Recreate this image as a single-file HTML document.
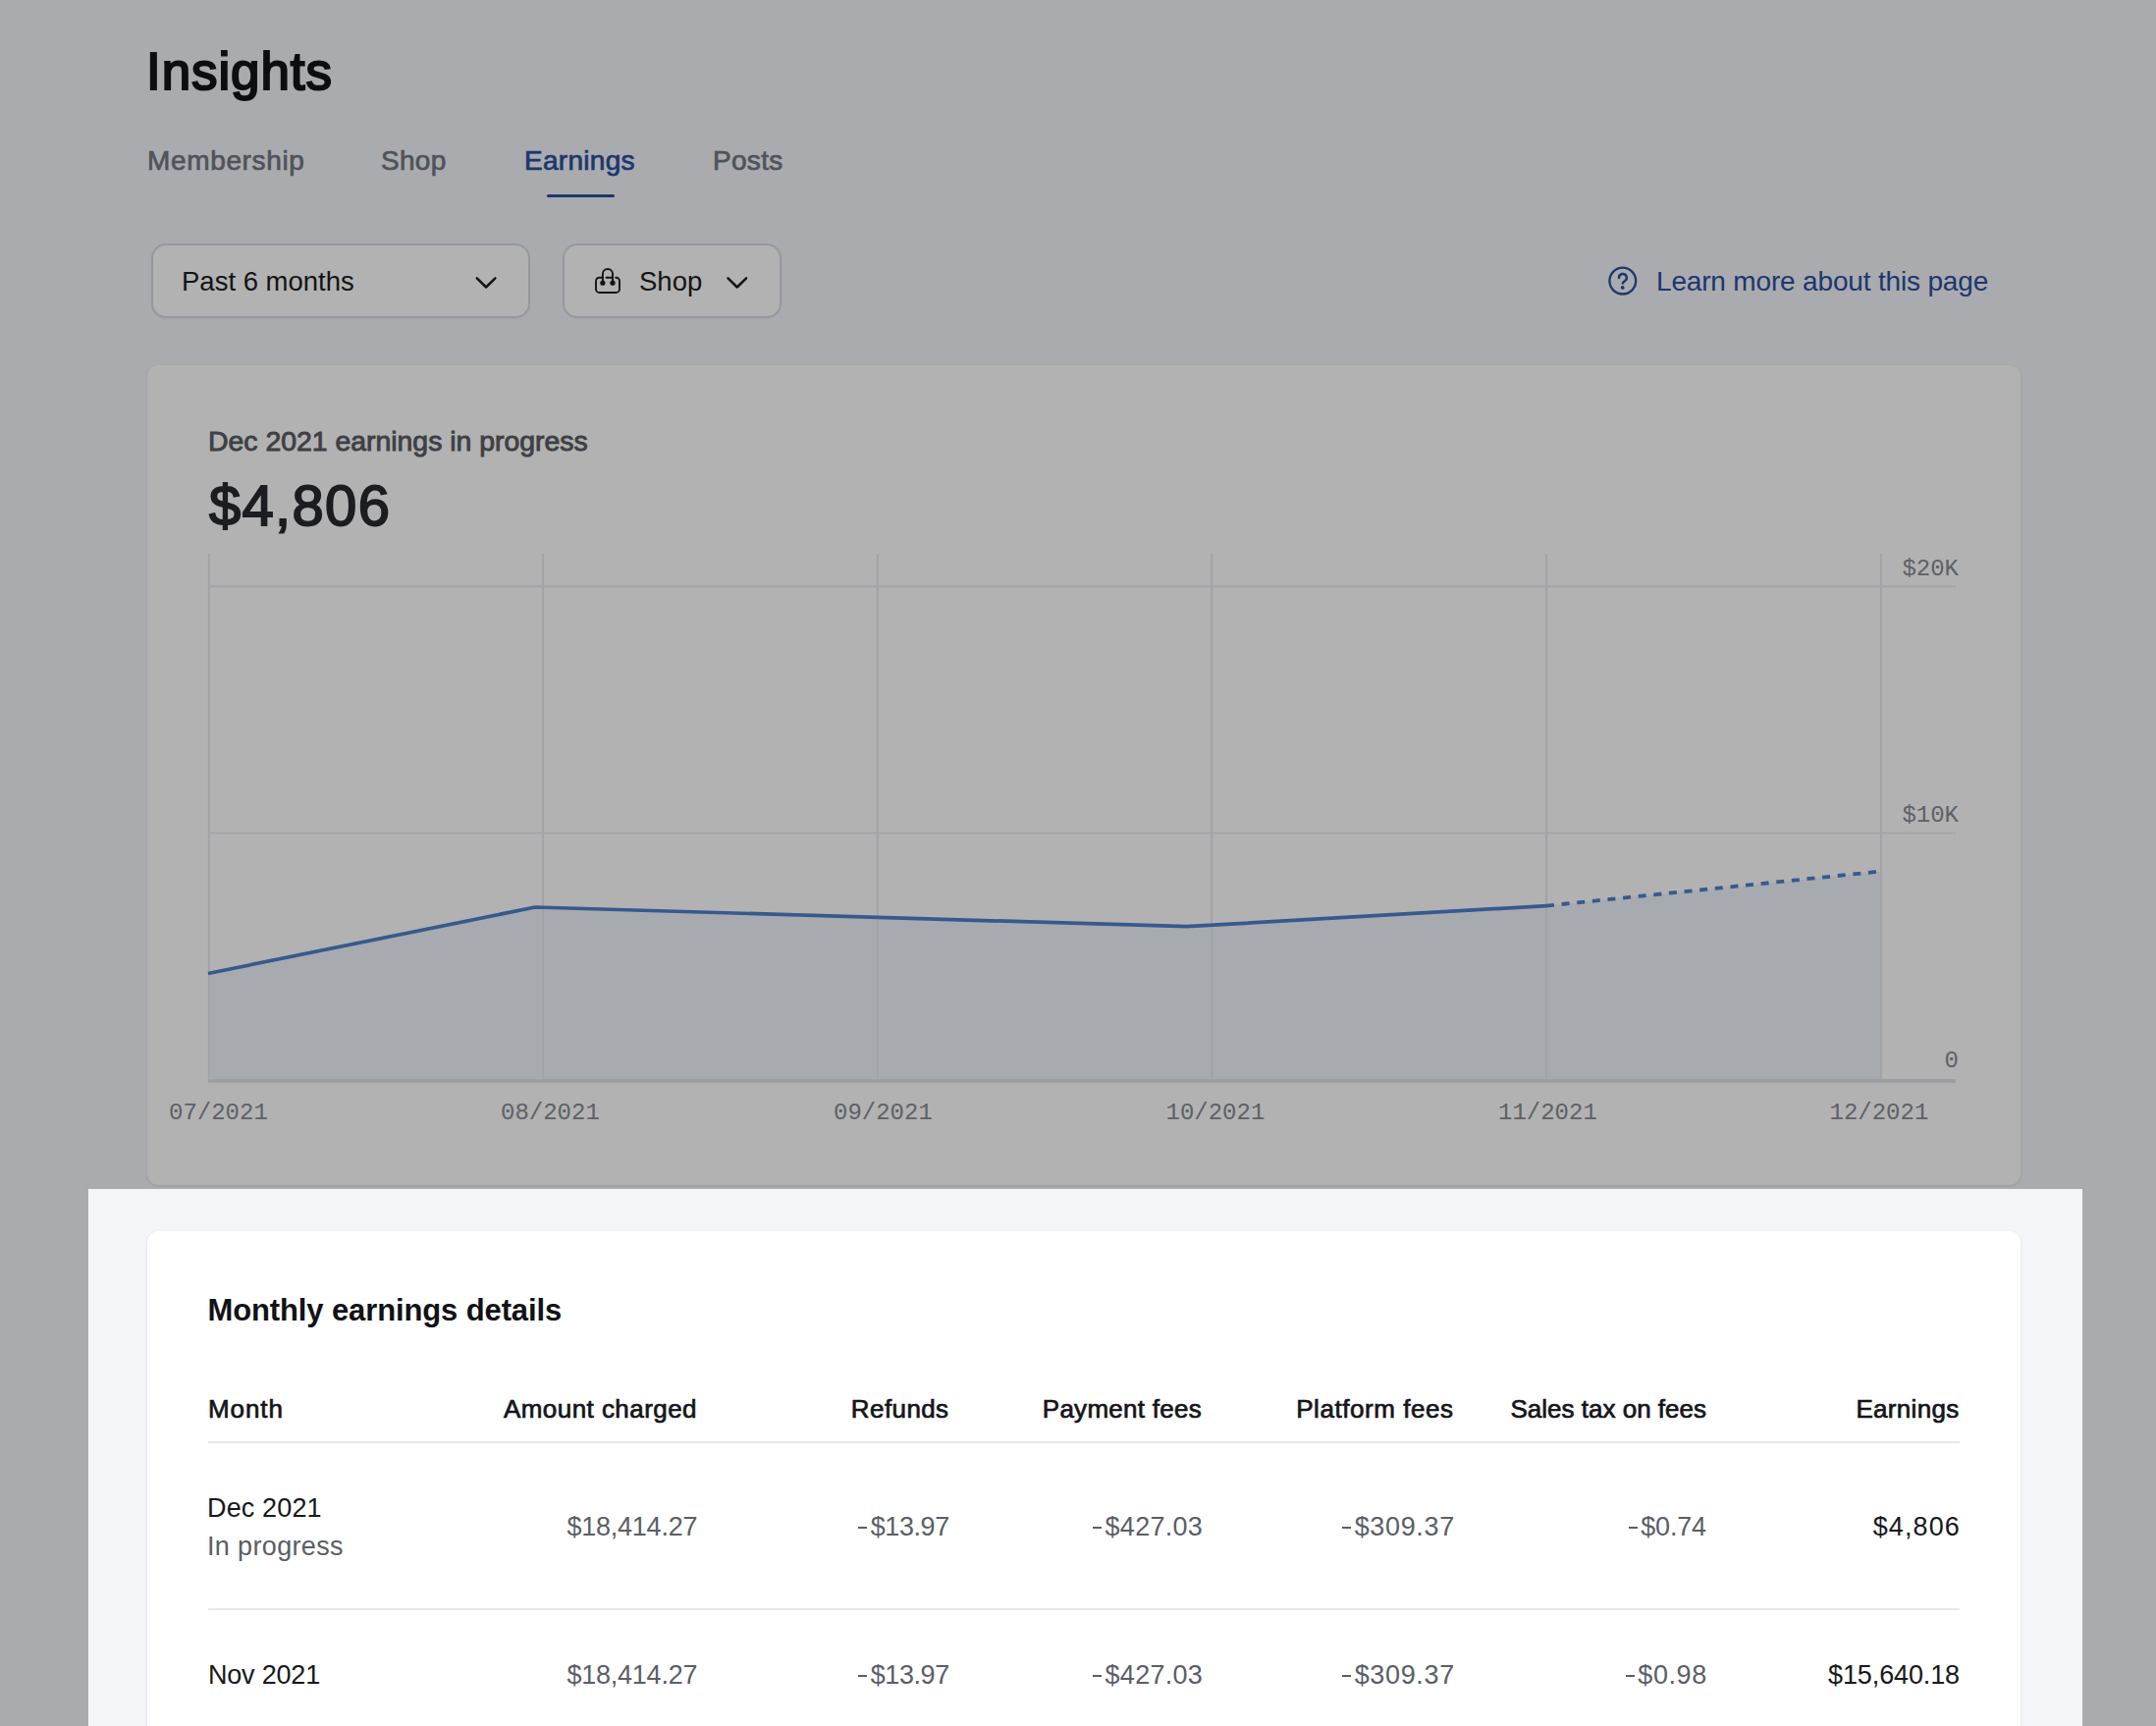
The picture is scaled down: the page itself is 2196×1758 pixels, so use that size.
<!DOCTYPE html>
<html><head><meta charset="utf-8">
<style>
*{box-sizing:border-box;margin:0;padding:0}
html,body{width:2196px;height:1758px;overflow:hidden}
body{background:#f4f5f9;font-family:"Liberation Sans",sans-serif;position:relative;color:#111}
.a{position:absolute;white-space:nowrap;line-height:1}
#title{left:149px;top:46.3px;font-size:53px;font-weight:400;color:#131519;letter-spacing:0.9px;-webkit-text-stroke:2.1px #131519}
.tab{top:150px;font-size:28px;letter-spacing:0.3px;color:#727783;-webkit-text-stroke:0.7px #727783}
.tab.on{color:#2a4f9f;-webkit-text-stroke:0.7px #2a4f9f}
#uline{left:556.5px;top:198.3px;width:69px;height:2.7px;background:#2a4f9f;border-radius:2px}
.dd{top:248px;height:76px;border:2px solid #d6dae3;border-radius:15px;background:#fff;box-shadow:0 1px 2px rgba(0,0,0,.05)}
.ddt{font-size:27.5px;color:#1c1e22;top:273px}
#learn{left:1687px;top:272.5px;font-size:28px;letter-spacing:-0.17px;color:#2a4f9f}
.card{background:#fff;border-radius:11px;box-shadow:0 1px 3px rgba(0,0,0,.09),0 0 1px rgba(0,0,0,.08)}
#card1{left:150px;top:372px;width:1908px;height:835px}
#card2{left:150px;top:1254px;width:1908px;height:700px}
#spot{left:90px;top:1211px;width:2031px;height:700px;box-shadow:0 0 0 5000px rgba(0,0,0,.3)}
#sub{left:212px;top:434.6px;font-size:28.4px;font-weight:400;color:#5a5c64;letter-spacing:0px;-webkit-text-stroke:0.9px #5a5c64}
#big{left:213px;letter-spacing:1.3px;top:486px;font-size:58px;font-weight:400;color:#282a2e;-webkit-text-stroke:1.8px #282a2e}
.mono{font-family:"Liberation Mono",monospace;font-size:24px;color:#888b93}
.yl{right:201px;text-align:right}
#mt{left:211.5px;top:1318.6px;font-size:31px;font-weight:700;color:#111216;letter-spacing:-0.12px}
.h{top:1422.3px;font-size:26px;font-weight:400;color:#141519;-webkit-text-stroke:0.7px #141519}
.r{text-align:right}
.v{font-size:27px;color:#5b5e66;letter-spacing:-0.2px}
.d{font-size:27px;color:#17181c;letter-spacing:-0.2px}
.hl{left:212px;width:1784px;height:2px;background:#e6e8ec}
svg{position:absolute;left:0;top:0}
.mn{display:inline-block;width:9px;height:2.3px;background:currentColor;vertical-align:7px;margin-left:1px;margin-right:3.3px}
</style></head><body>
<div class="a" id="title">Insights</div>
<div class="a tab" style="left:150px;letter-spacing:0.65px">Membership</div>
<div class="a tab" style="left:388px">Shop</div>
<div class="a tab on" style="left:534px">Earnings</div>
<div class="a tab" style="left:726px">Posts</div>
<div class="a" id="uline"></div>

<div class="a dd" style="left:154px;width:386px"></div>
<div class="a ddt" style="left:185px">Past 6 months</div>
<div class="a dd" style="left:573px;width:223px"></div>
<div class="a ddt" style="left:651px">Shop</div>

<div class="a" id="learn">Learn more about this page</div>

<div class="a card" id="card1"></div>
<div class="a card" id="card2"></div>

<svg width="2196" height="1758" viewBox="0 0 2196 1758">
  <!-- chevrons -->
  <polyline points="485.8,283.3 495.1,292.5 504.4,283.3" fill="none" stroke="#1c1e22" stroke-width="2.5" stroke-linecap="round" stroke-linejoin="round"/>
  <polyline points="741.5,283.3 750.8,292.5 760.1,283.3" fill="none" stroke="#1c1e22" stroke-width="2.5" stroke-linecap="round" stroke-linejoin="round"/>
  <!-- bag icon -->
  <g fill="none" stroke="#1c1e22" stroke-width="1.9" stroke-linecap="round" stroke-linejoin="round">
    <path d="M613.9 282.75 H610.5 A3.5 3.5 0 0 0 607 286.25 V294.45 A3.5 3.5 0 0 0 610.5 297.95 H627.5 A3.5 3.5 0 0 0 631 294.45 V286.25 A3.5 3.5 0 0 0 627.5 282.75 H627.2"/>
    <path d="M617.6 282.75 H624"/>
    <path d="M613.9 288.2 V279.1 A5.05 5.05 0 0 1 624 279.1 V288.2"/>
  </g>
  <circle cx="613.9" cy="288.2" r="2.6" fill="#1c1e22"/>
  <circle cx="624" cy="288.2" r="2.6" fill="#1c1e22"/>
  <!-- help icon -->
  <circle cx="1652.8" cy="286.1" r="13.4" fill="none" stroke="#2a4f9f" stroke-width="2.3"/>
  <path d="M1649 283 A3.9 3.9 0 1 1 1654.9 286.2 C1653.6 287.1 1652.8 287.7 1652.8 288.5" fill="none" stroke="#2a4f9f" stroke-width="2.4" stroke-linecap="round"/>
  <circle cx="1652.7" cy="292.9" r="1.9" fill="#2a4f9f"/>

  <!-- chart gridlines -->
  <g stroke="#e9ecf2" stroke-width="2">
    <line x1="212" y1="597.3" x2="1992" y2="597.3"/>
    <line x1="212" y1="848.4" x2="1992" y2="848.4"/>
  </g>
  <!-- fill -->
  <polygon points="212,991.5 545,924 1209,943.7 1575,922.6 1915.5,887.5 1915.5,1100 212,1100" fill="#5080cc" fill-opacity="0.085"/>
  <g stroke="#e7eaf0" stroke-width="2">
    <line x1="212.8" y1="564" x2="212.8" y2="1100"/>
    <line x1="553.1" y1="564" x2="553.1" y2="1100"/>
    <line x1="893.9" y1="564" x2="893.9" y2="1100"/>
    <line x1="1234.3" y1="564" x2="1234.3" y2="1100"/>
    <line x1="1575" y1="564" x2="1575" y2="1100"/>
    <line x1="1915.9" y1="564" x2="1915.9" y2="1100"/>
  </g>
  <line x1="212" y1="1100.9" x2="1992" y2="1100.9" stroke="#e0e2e9" stroke-width="3.6"/>
  <polyline points="212,991.5 545,924 1209,943.7 1575,922.6" fill="none" stroke="#5080cc" stroke-width="3.7" stroke-linejoin="round"/>
  <line x1="1575" y1="922.6" x2="1915.5" y2="887.5" stroke="#5080cc" stroke-width="3.8" stroke-dasharray="8 7.7"/>
</svg>

<div class="a" id="sub">Dec 2021 earnings in progress</div>
<div class="a" id="big">$4,806</div>

<div class="a mono yl" style="top:567.6px">$20K</div>
<div class="a mono yl" style="top:818.8px">$10K</div>
<div class="a mono yl" style="top:1069.1px">0</div>
<div class="a mono" style="left:172px;top:1121.6px">07/2021</div>
<div class="a mono" style="left:510px;top:1121.6px">08/2021</div>
<div class="a mono" style="left:849px;top:1121.6px">09/2021</div>
<div class="a mono" style="left:1187.5px;top:1121.6px">10/2021</div>
<div class="a mono" style="left:1526px;top:1121.6px">11/2021</div>
<div class="a mono" style="left:1863.5px;top:1121.6px">12/2021</div>

<div class="a" id="mt">Monthly earnings details</div>
<div class="a h" style="left:212px;letter-spacing:0.9px">Month</div>
<div class="a h r" style="right:1486px;letter-spacing:0.45px">Amount charged</div>
<div class="a h r" style="right:1229.5px;letter-spacing:0.4px">Refunds</div>
<div class="a h r" style="right:972px;letter-spacing:0.27px">Payment fees</div>
<div class="a h r" style="right:715.5px;letter-spacing:0.55px">Platform fees</div>
<div class="a h r" style="right:458px">Sales tax on fees</div>
<div class="a h r" style="right:200.5px;letter-spacing:0.3px">Earnings</div>
<div class="a hl" style="top:1467.5px"></div>

<div class="a d" style="left:211px;top:1523px;letter-spacing:0.15px">Dec 2021</div>
<div class="a v" style="left:211px;top:1561.8px;letter-spacing:0.35px">In progress</div>
<!--VALS-->
<div class="a v r" style="right:1485.80px;top:1541.8px;letter-spacing:-0.240px">$18,414.27</div>
<div class="a v r" style="right:1229.20px;top:1541.8px;letter-spacing:-0.420px"><i class="mn"></i>$13.97</div>
<div class="a v r" style="right:971.00px;top:1541.8px;letter-spacing:0.257px"><i class="mn"></i>$427.03</div>
<div class="a v r" style="right:714.20px;top:1541.8px;letter-spacing:0.643px"><i class="mn"></i>$309.37</div>
<div class="a v r" style="right:458.20px;top:1541.8px;letter-spacing:-0.216px"><i class="mn"></i>$0.74</div>
<div class="a d r" style="right:199.00px;top:1541.8px;letter-spacing:1.116px">$4,806</div>
<div class="a hl" style="top:1638px"></div>
<div class="a d" style="left:212px;top:1693px">Nov 2021</div>
<div class="a v r" style="right:1485.80px;top:1693px;letter-spacing:-0.240px">$18,414.27</div>
<div class="a v r" style="right:1229.20px;top:1693px;letter-spacing:-0.420px"><i class="mn"></i>$13.97</div>
<div class="a v r" style="right:971.00px;top:1693px;letter-spacing:0.257px"><i class="mn"></i>$427.03</div>
<div class="a v r" style="right:714.20px;top:1693px;letter-spacing:0.643px"><i class="mn"></i>$309.37</div>
<div class="a v r" style="right:457.20px;top:1693px;letter-spacing:0.576px"><i class="mn"></i>$0.98</div>
<div class="a d r" style="right:200.00px;top:1693px;letter-spacing:-0.120px">$15,640.18</div>
<!--/VALS-->

<div class="a" id="spot"></div>
</body></html>
